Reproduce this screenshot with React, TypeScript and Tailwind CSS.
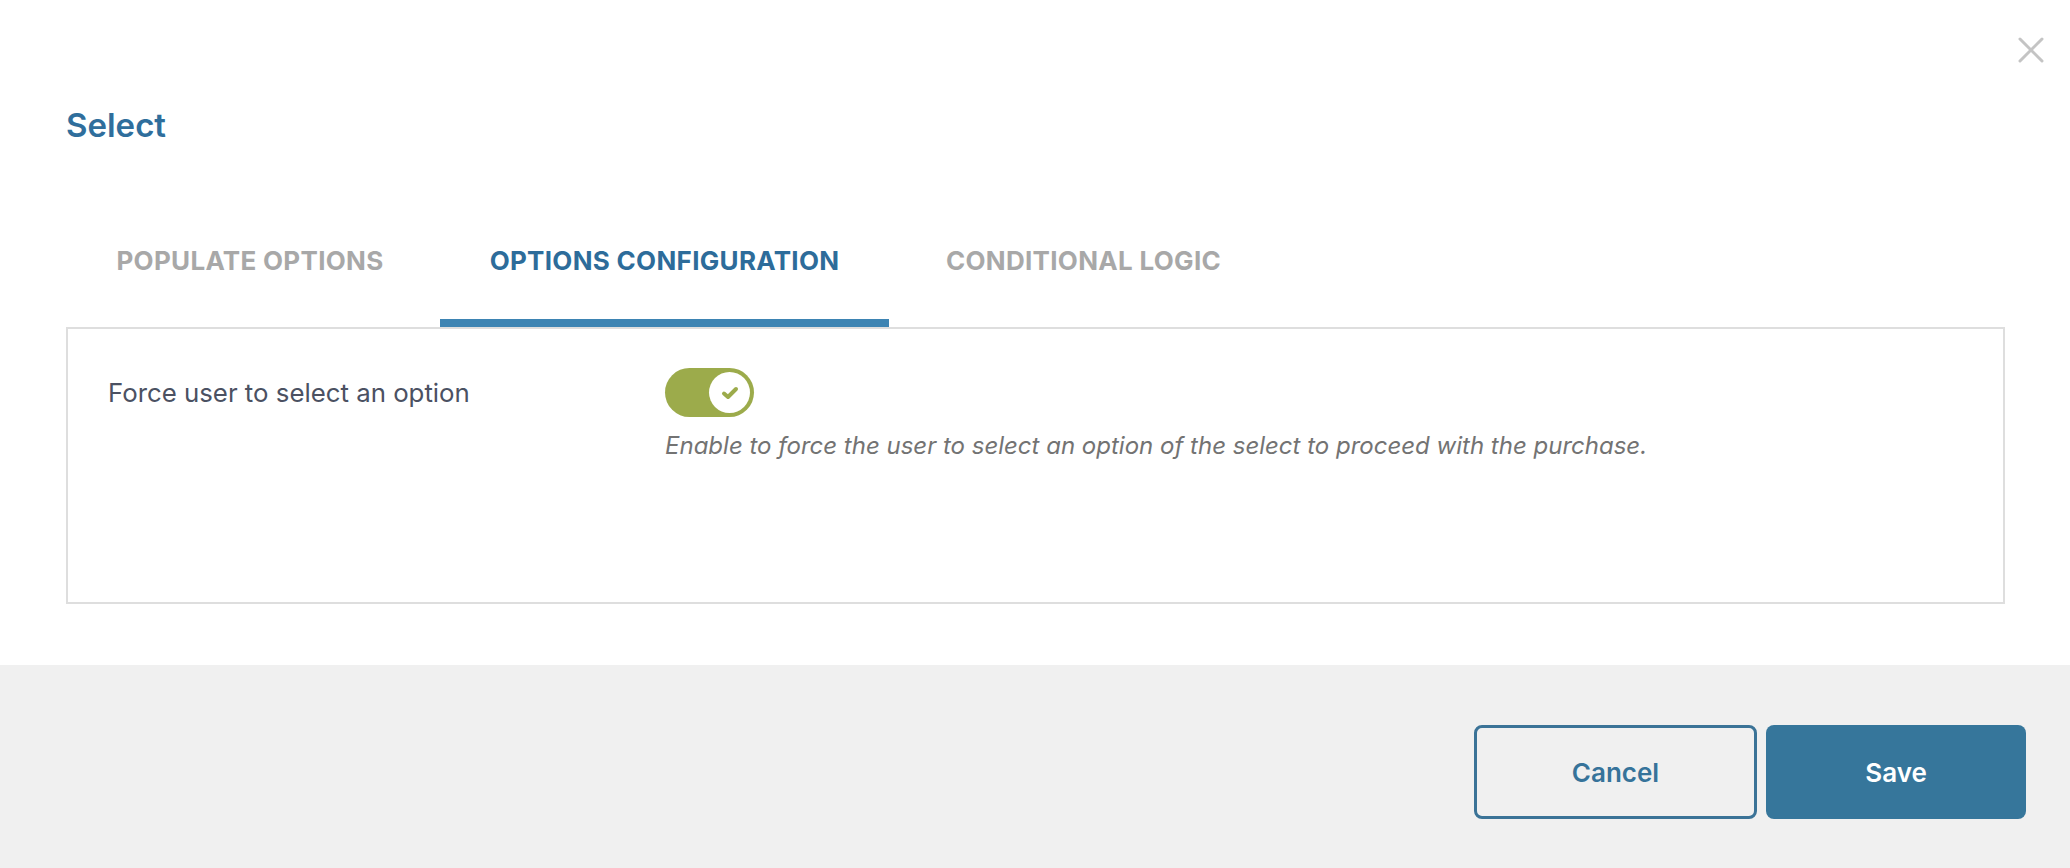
import { useState } from "react";

const tabs = [
  { id: "populate", label: "POPULATE OPTIONS", width: "w-[368px]" },
  { id: "config", label: "OPTIONS CONFIGURATION", width: "w-[449px]" },
  { id: "logic", label: "CONDITIONAL LOGIC", width: "w-[377px]" },
];

const CloseIcon = () => (
  <svg width="26" height="26" viewBox="0 0 26 26" fill="none" stroke="#c4c4c4" strokeWidth="3" strokeLinecap="round">
    <line x1="2" y1="2" x2="24" y2="24" />
    <line x1="24" y1="2" x2="2" y2="24" />
  </svg>
);

const Toggle = ({ on, onChange }: { on: boolean; onChange: () => void }) => (
  <button
    type="button"
    onClick={onChange}
    className={`flex h-[49px] w-[89px] items-center rounded-full px-[4px] ${
      on ? "justify-end bg-[#9cab4b]" : "justify-start bg-[#cfcfcf]"
    }`}
  >
    <span className="flex h-[41px] w-[41px] items-center justify-center rounded-full bg-white">
      {on ? (
        <svg width="18" height="14" viewBox="0 0 18 14" fill="none" stroke="#9cab4b" strokeWidth="4" strokeLinecap="round" strokeLinejoin="round">
          <polyline points="3,7.5 7,11 15,3" />
        </svg>
      ) : null}
    </span>
  </button>
);

export default function App() {
  const [activeTab, setActiveTab] = useState("config");
  const [forceSelect, setForceSelect] = useState(true);

  return (
    <div className="relative h-[868px] w-full bg-white font-[Inter,'Noto_Sans',sans-serif]">
      <button type="button" className="absolute right-[26px] top-[37px]" aria-label="Close">
        <CloseIcon />
      </button>

      <div className="pl-[66px] pr-[65px]">
        <h1 className="pt-[105px] text-[33px] font-semibold leading-[40px] text-[#2f6e9c]">Select</h1>

        <div className="mt-[100px] flex gap-[6px]">
          {tabs.map((tab) => {
            const active = tab.id === activeTab;
            return (
              <button
                key={tab.id}
                type="button"
                onClick={() => setActiveTab(tab.id)}
                className={`${tab.width} border-b-8 pb-[42px] text-center text-[26px] font-bold leading-[32px] tracking-[0.3px] ${
                  active ? "border-[#3d84b3] text-[#2d6c9a]" : "border-transparent text-[#a8a8a8]"
                }`}
              >
                {tab.label}
              </button>
            );
          })}
        </div>

        <div className="h-[277px] border-2 border-[#dedede] pl-[40px] pt-[39px]">
          <div className="grid grid-cols-[557px_1fr]">
            <p className="mt-[9px] text-[25.8px] leading-[32px] text-[#4b5162]">Force user to select an option</p>
            <div>
              <Toggle on={forceSelect} onChange={() => setForceSelect((value) => !value)} />
              <p className="mt-[14px] text-[24px] italic leading-[30px] text-[#737373]">
                Enable to force the user to select an option of the select to proceed with the purchase.
              </p>
            </div>
          </div>
        </div>
      </div>

      <footer className="mt-[61px] flex h-[203px] items-start justify-end gap-[9px] bg-[#f0f0f0] pr-[44px] pt-[60px]">
        <button
          type="button"
          className="h-[94px] w-[283px] rounded-[8px] border-[3px] border-[#3b7397] text-[26px] font-semibold text-[#36739a]"
        >
          Cancel
        </button>
        <button type="button" className="h-[94px] w-[260px] rounded-[8px] bg-[#36769b] text-[26px] font-semibold text-white">
          Save
        </button>
      </footer>
    </div>
  );
}
